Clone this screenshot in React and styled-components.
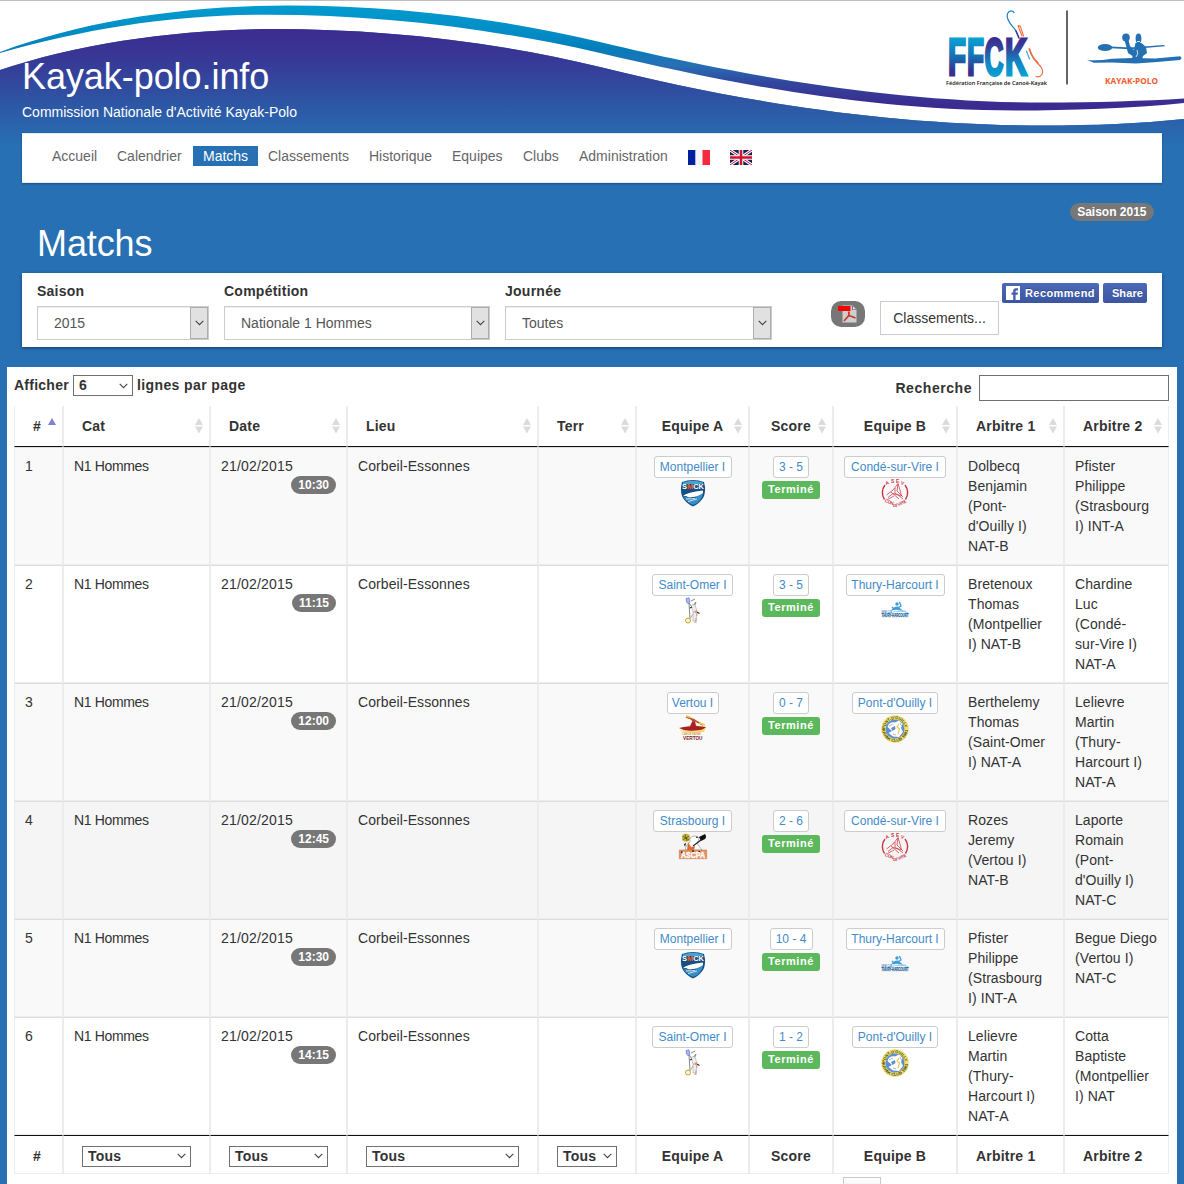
import React from "react";
import styled, { createGlobalStyle } from "styled-components";

const Global = createGlobalStyle`
  * { box-sizing: border-box; }
  html, body { margin: 0; background: #2770b4; }
  body {
    font-family: "Liberation Sans", Arial, sans-serif;
    font-size: 14px;
    line-height: 20px;
    color: #333;
    overflow: hidden;
  }
`;

const Page = styled.div`
  width: 1184px;
  height: 1184px;
  overflow: hidden;
  position: relative;
  background: #2770b4;
`;

const Banner = styled.svg`
  position: absolute;
  top: 0;
  left: 0;
  display: block;
`;

const Content = styled.div`
  position: relative;
  display: flex;
  flex-direction: column;
`;

const SiteHead = styled.header`
  padding: 57px 22px 0;
  height: 133px;
  color: #fff;
`;

const Title = styled.h1`
  margin: 0;
  font-size: 36px;
  font-weight: 400;
  line-height: 40px;
  letter-spacing: ${(p) => p.$track || 0}px;
`;

const Tagline = styled.p`
  margin: 5px 0 0;
`;

const Nav = styled.nav`
  margin: 0 22px;
  height: 50px;
  padding: 13px 20px 0;
  display: flex;
  align-items: flex-start;
  background: #fff;
  border: 1px solid #e3eef7;
  border-width: 1px 0;
  box-shadow: 0 1px 2px rgba(0, 0, 0, 0.3);
`;

const NavItem = styled.a`
  width: ${(p) => p.$w}px;
  height: 20px;
  margin-top: -1px;
  padding: 0 10px;
  white-space: nowrap;
  color: ${(p) => (p.$active ? "#fff" : "#666")};
  background: ${(p) => (p.$active ? "#2770b4" : "transparent")};
`;

const FlagItem = styled(NavItem)`
  padding-top: 4px;
  line-height: 0;
`;

const PageHead = styled.div`
  display: flex;
  justify-content: space-between;
  align-items: flex-start;
  height: 90px;
  padding: 20px 30px 0 37px;
  color: #fff;
  ${Title} { margin-top: 21px; }
`;

const Badge = styled.span`
  display: inline-block;
  height: 18px;
  padding: 0 ${(p) => p.$pad || 7}px;
  border-radius: 10px;
  background: #777;
  color: #fff;
  font-size: 12px;
  font-weight: 700;
  line-height: 18px;
  white-space: nowrap;
`;

const Filters = styled.section`
  margin: 0 22px;
  height: 74px;
  padding: 8px 15px 0;
  display: flex;
  align-items: flex-start;
  background: #fff;
  box-shadow: 0 1px 3px rgba(0, 0, 0, 0.45);
  > * { flex-shrink: 0; }
`;

const Field = styled.div`
  width: ${(p) => p.$w}px;
  margin-right: 15px;
`;

const Label = styled.label`
  display: block;
  font-weight: 700;
  letter-spacing: ${(p) => p.$track ?? 0.25}px;
`;

const BigSelect = styled.div`
  display: flex;
  align-items: stretch;
  height: 34px;
  margin-top: 5px;
  padding-left: 16px;
  border: 1px solid #ccc;
  box-shadow: inset 0 1px 1px rgba(0, 0, 0, 0.075);
  color: #555;
  line-height: 33px;
`;

const ArrowBox = styled.span`
  width: 18px;
  margin-left: auto;
  display: flex;
  align-items: center;
  justify-content: center;
  background: #e1e1e1;
  border: 1px solid #adadad;
`;

const PdfBadge = styled.span`
  width: 34px;
  height: 26px;
  margin: 20px 15px 0 44px;
  border-radius: 10px;
  background: #777;
  display: flex;
  align-items: center;
  justify-content: center;
`;

const OutlineButton = styled.button`
  width: 119px;
  height: 34px;
  margin: 20px 3px 0 0;
  padding: 0;
  background: #fff;
  border: 1px solid #ccc;
  font: inherit;
  color: #333;
`;

const FbButton = styled.span`
  width: ${(p) => p.$w}px;
  height: 20px;
  margin: 2px 4px 0 0;
  padding: 0 4px;
  display: flex;
  align-items: center;
  justify-content: ${(p) => (p.$icon ? "space-between" : "flex-end")};
  border-radius: 2px;
  background: linear-gradient(#4c69ba, #3b55a0);
  color: #fff;
  font-size: 11px;
  font-weight: 700;
  letter-spacing: ${(p) => (p.$icon ? 0.45 : 0.1)}px;
  text-shadow: 0 -1px 0 #354c8c;
`;

const TablePanel = styled.section`
  margin: 20px 7px 0;
  height: 830px;
  padding: 8px 8px 0 7px;
  background: #fff;
`;

const Controls = styled.div`
  display: flex;
  justify-content: space-between;
  align-items: flex-start;
  height: 31px;
`;

const Control = styled.div`
  display: flex;
  align-items: ${(p) => p.$align || "flex-start"};
  gap: ${(p) => p.$gap}px;
`;

const SmallSelect = styled.div`
  width: ${(p) => p.$w}px;
  height: 21px;
  padding: 0 4px 0 5px;
  display: flex;
  align-items: center;
  justify-content: space-between;
  border: 1px solid #707070;
  background: #fff;
  font-weight: 700;
  letter-spacing: 0.2px;
  line-height: 19px;
`;

const Search = styled.input`
  width: 190px;
  height: 26px;
  border: 1px solid #707070;
  padding: 0;
  background: #fff;
`;

const Table = styled.table`
  width: 1155px;
  table-layout: fixed;
  border-collapse: separate;
  border-spacing: 0;
`;

const Cell = styled.td`
  padding: 8px 10px;
  vertical-align: top;
  text-align: ${(p) => (p.$center ? "center" : "left")};
  letter-spacing: ${(p) => p.$track || 0}px;
  border: 1px solid #ececec;
  border-top-color: #ddd;
  white-space: nowrap;
`;

const HeadCell = styled.th`
  height: 41px;
  padding: 0 18px;
  text-align: ${(p) => (p.$center ? "center" : "left")};
  border: 1px solid #ececec;
  border-top: 0;
  border-bottom-color: #111;
  white-space: nowrap;
  letter-spacing: 0.2px;
  position: relative;
`;

const FootCell = styled(HeadCell)`
  height: 39px;
  padding-top: ${(p) => (p.$filter ? 3 : 2)}px;
  border-top: 1px solid #111;
  border-bottom-color: #ececec;
`;

const SortMark = styled.svg`
  position: absolute;
  right: 5px;
  top: 12px;
`;

const Row = styled.tr`
  height: ${(p) => p.$h}px;
  background: ${(p) => p.$bg};
`;

const Time = styled(Badge)`
  display: block;
  width: fit-content;
  margin-left: auto;
  letter-spacing: 0;
`;

const Tag = styled.a`
  display: block;
  width: ${(p) => p.$w}px;
  height: 22px;
  margin: 0 auto;
  border: 1px solid #ccc;
  border-radius: 3px;
  background: #fff;
  color: #428bca;
  font-size: 12px;
  line-height: 20px;
  text-align: center;
`;

const Status = styled.span`
  display: block;
  width: 58px;
  height: 18px;
  margin: 3px auto 0;
  border-radius: 3px;
  background: #5cb85c;
  color: #fff;
  font-size: 11px;
  font-weight: 700;
  line-height: 17px;
  letter-spacing: 0.55px;
`;

const LogoSlot = styled.span`
  display: block;
  height: 28px;
  margin-top: 1px;
  line-height: 0;
  svg { overflow: visible; }
`;

const PagerButton = styled.div`
  width: 38px;
  height: 30px;
  margin: 3px 0 0 829px;
  border: 1px solid #cacaca;
  background: linear-gradient(#fff, #ddd);
`;

const Chevron = ({ color = "#444" }) => (
  <svg width="9" height="6" viewBox="0 0 9 6" fill="none" stroke={color} strokeWidth="1.1">
    <path d="M.7.8 4.5 4.6 8.3.8" />
  </svg>
);

const Font = '"Liberation Sans", Arial, sans-serif';

const LETTERS = [
  { c: "F", x: 948, w: 18, paint: "url(#ff)" },
  { c: "F", x: 967, w: 17, paint: "url(#ff)" },
  { c: "C", x: 984.5, w: 19, paint: "url(#ck)" },
  { c: "K", x: 1005, w: 22, paint: "url(#ck)" },
];

const BannerArt = () => (
  <Banner width="1184" height="184" viewBox="0 0 1184 184">
    <defs>
      <linearGradient id="sky" gradientUnits="userSpaceOnUse" x1="0" y1="29" x2="0" y2="146">
        <stop offset="0" stopColor="#3d2b90" />
        <stop offset=".3" stopColor="#363b98" />
        <stop offset=".65" stopColor="#2d57a5" />
        <stop offset="1" stopColor="#2770b4" />
      </linearGradient>
      <linearGradient id="ribbon" gradientUnits="userSpaceOnUse" x1="0" y1="5" x2="0" y2="105">
        <stop offset="0" stopColor="#039ccf" />
        <stop offset=".3" stopColor="#028bc4" />
        <stop offset=".45" stopColor="#067cba" />
        <stop offset=".6" stopColor="#2770b4" />
        <stop offset=".78" stopColor="#32469d" />
        <stop offset="1" stopColor="#3b2a8f" />
      </linearGradient>
      <linearGradient id="ff" gradientUnits="userSpaceOnUse" x1="0" y1="38" x2="0" y2="77">
        <stop offset="0" stopColor="#0aa2d4" />
        <stop offset=".45" stopColor="#1573b5" />
        <stop offset=".85" stopColor="#37308f" />
        <stop offset="1" stopColor="#37308f" />
      </linearGradient>
      <linearGradient id="ck" gradientUnits="userSpaceOnUse" x1="0" y1="38" x2="0" y2="77">
        <stop offset="0" stopColor="#3b2a8f" />
        <stop offset=".25" stopColor="#34429b" />
        <stop offset=".6" stopColor="#1382c0" />
        <stop offset="1" stopColor="#08a3d6" />
      </linearGradient>
    </defs>
    <path fill="#fff" d="M0 0H1184V119C1140 123.500 1095 125.500 1043 125.500C870 125.500 717 96 600 67C490 40 375 29 275 29C180 29 80 43 0 70Z" />
    <path fill="url(#sky)" d="M0 70C80 43 180 29 275 29C375 29 490 40 600 67C717 96 870 125.500 1043 125.500C1095 125.500 1140 123.500 1184 119V184H0Z" />
    <path fill="url(#ribbon)" d="M0 52C85 20 190 5.500 287 5.500C400 5.500 510 20 600 42C700 66 870 102.500 1043 102.500C1095 102.500 1145 101 1184 98.500V103C1130 108.500 1070 110.500 1016 110.500C860 110.500 715 80 600 53C490 28 380 14.700 268 14.700C170 14.700 85 29 0 53Z" />
    <path stroke="#c0c0c0" d="M0 .5H1184" />

    <g fontFamily={Font} fontWeight="700">
      {LETTERS.map(({ c, x, w, paint }) => (
        <text key={x} x={x} y="75.200" fontSize="51.500" textLength={w} lengthAdjust="spacingAndGlyphs" fill={paint} stroke={paint} strokeWidth="3">{c}</text>
      ))}
      <text x="946" y="84.500" fontFamily='"Open Sans", sans-serif' fontWeight="600" fontSize="6" textLength="101" lengthAdjust="spacingAndGlyphs" fill="#111">Fédération Française de Canoë-Kayak</text>
      <text x="1105" y="84" fontFamily='"Open Sans", sans-serif' fontSize="8" textLength="53" lengthAdjust="spacingAndGlyphs" fill="#ee5a2b">KAYAK-POLO</text>
    </g>
    <g fill="none" strokeLinecap="round">
      <path stroke="#1b83bf" strokeWidth="1.200" d="M1014 12.500C1011 9 1006 12 1007.500 18C1009 24 1014 27 1016 31" />
      <path stroke="#37308f" strokeWidth="1.600" d="M1016 31L1019 38" />
      <path stroke="#ee6a40" strokeWidth="1.100" d="M1022 36L1018.500 27Q1017 24.500 1020.500 26.500L1023.500 36M1029 49C1032 58 1037 63 1041 67C1045 73 1041 78 1036 76.500" />
      <path stroke="#ee6a40" strokeWidth="1.500" d="M1029.500 49C1032 57 1034 59 1038 63" />
      <path stroke="#42a9da" strokeWidth="1.200" d="M1026.500 51L1029.500 59" />
    </g>
    <path stroke="#333" strokeWidth="1.500" d="M1067 10.500V84.500" />
    <g fill="#2470b3">
      <ellipse cx="1105" cy="47.500" rx="7.200" ry="3.600" />
      <path d="M1087 60Q1098 61 1112 58.800L1132 58 1155 58.500 1180 56.200Q1183 58 1180 60L1157 62 1136 63.500 1112 62.500 1094 62.800Z" />
      <path d="M1111 46.500L1130 47.500 1164 45 1165 46.300 1130 49.300 1111 48.200Z" />
      <ellipse cx="1126" cy="37.500" rx="3.800" ry="4" />
      <path d="M1124.500 40H1128.500L1130 46 1134 50 1135.500 43H1141.500L1146 47 1147 53 1143 56 1142 60H1132L1132.500 56 1128 53Z" />
      <ellipse cx="1138.500" cy="38.500" rx="2.900" ry="5" />
    </g>
    <path stroke="#fff" strokeWidth=".8" fill="none" d="M1137 50Q1139 54 1136 57M1137 41.500H1140" />
  </Banner>
);

const FlagFr = () => (
  <svg width="22" height="15" viewBox="0 0 22 15">
    <path fill="#f5f5f8" d="M0 0h22v15H0z" />
    <path fill="#00209f" d="M0 0h7.300v15H0z" />
    <path fill="#f42a3c" d="M14.500 0H22v15h-7.500z" />
  </svg>
);

const FlagUk = () => (
  <svg width="22" height="15" viewBox="0 0 22 15">
    <path fill="#12205f" d="M0 0h22v15H0z" />
    <path stroke="#fff" strokeWidth="3" d="M0 0L22 15M22 0L0 15" />
    <path stroke="#cf142b" strokeWidth="1" d="M0 0L22 15M22 0L0 15" />
    <path stroke="#fff" strokeWidth="4.600" d="M11 0V15M0 7.500H22" />
    <path stroke="#cf142b" strokeWidth="2.600" d="M11 0V15M0 7.500H22" />
  </svg>
);

const PdfIcon = () => (
  <svg width="20" height="20" viewBox="0 0 20 20">
    <path fill="#d0cfcd" d="M4.500 1.500H14.500L18.500 5.500V18.500H4.500Z" />
    <path fill="#777" d="M14 1L19 6H14Z" />
    <path fill="#eee" d="M15 2.500V5.300H17.800Z" />
    <path fill="#fb0000" d="M0 2H12.500V7H0Z" />
    <path fill="none" stroke="#c8322b" strokeWidth="1.600" d="M10.500 7.500Q12 10 10 12.500L6 17M10 12H12.500L17.500 14" />
  </svg>
);

const FbIcon = () => (
  <svg width="14" height="14" viewBox="0 0 14 14">
    <path fill="#fff" d="M0 0H14V14H0z" />
    <path fill="#4560ac" d="M7.200 14V8.800H5.500V6.600H7.200V5Q7.200 2.400 9.800 2.300H12V4.400H10.500Q9.600 4.400 9.600 5.300V6.600H12L11.600 8.800H9.600V14Z" />
  </svg>
);

const LogoMontpellier = () => (
  <svg width="28" height="28" viewBox="0 0 28 28">
    <path fill="#174f82" d="M3 3Q14-1 25 3L26 8Q26.500 15 24 19Q20 25 14 27.500Q8 25 4 19Q1.500 15 2 8Z" />
    <path fill="#4aa3d4" d="M4 3.500Q14 0 24 3.500L24 5H4Z" />
    <path fill="#398fc5" d="M4 17L13 20 24 14Q23 23 14 26 7 23 4 17Z" />
    <path fill="#fff" d="M4 17Q8 13 24 11.500L24 14Q19 18 10 18.500L7 17Z" />
    <path stroke="#d5ecf7" strokeWidth=".9" d="M7 20L16 19.500M9 22.500L18 20" />
    <text x="3" y="10.300" fontFamily={Font} fontWeight="700" fontSize="7.800" textLength="22" lengthAdjust="spacingAndGlyphs" fill="#fff">
      S<tspan fill="#f05b25">M</tspan>CK
    </text>
  </svg>
);

const LogoConde = () => (
  <svg width="28" height="28" viewBox="0 0 28 28" fill="none" stroke="#cc3342">
    <path strokeWidth="1.400" d="M4 6A12.300 12.300 0 0 0 3.500 20.500M24 6A12.300 12.300 0 0 1 24.500 20.500" />
    <path strokeWidth=".75" d="M5.500 16L12 11 14.500 8 17 4.500 19 11 20.500 17M7 18.500L12 14.500 17 16 22 20M6.500 20.500L13 17M14 9L14 14.500 20 17M10 13L18 20M17 5L16 12 22 18" />
    <g fill="#cc3342" stroke="none" fontFamily={Font} fontWeight="700" fontSize="4.800">
      <text x="4.500" y="5.500" transform="rotate(-20 6 4)">A</text>
      <text x="10" y="4.200">S</text>
      <text x="15" y="4.200">E</text>
      <text x="20" y="5.600" transform="rotate(18 21 4)">V</text>
      <text x="3.500" y="23" fontSize="4.300" textLength="9" transform="rotate(22 4 23)">CON</text>
      <text x="12" y="27.800" fontSize="4.300" textLength="4.500" lengthAdjust="spacingAndGlyphs">DÉ</text>
      <text x="17.500" y="27" fontSize="4.300" textLength="9" lengthAdjust="spacingAndGlyphs" transform="rotate(-26 18 27)">VIRE</text>
    </g>
  </svg>
);

const LogoSaintOmer = () => (
  <svg width="28" height="28" viewBox="0 0 28 28" fill="none">
    <path fill="#aab6f3" stroke="#6879cc" strokeWidth=".7" d="M7 1.500L10 .8 11 5.500 9 6.800 7.500 5Z" />
    <path stroke="#888" strokeWidth="1" d="M10 6L13 10 19 16M10 6L11 22M12 4L14 3 16 2M13 10L17 5 15 10 17 16" />
    <path fill="#eee" stroke="#aaa" strokeWidth=".6" d="M12 8L16 8 18 14 14 15ZM14 15L18 16 17 24 14 24Z" />
    <path stroke="#333" strokeWidth="1.200" d="M17 14.500L20.500 16.500M13 10L11 11" />
    <path stroke="#ef9b7e" strokeWidth="1.200" d="M17 13L18 19M15 25H17" />
    <circle cx="9" cy="23.500" r="2.500" fill="#fff6c8" stroke="#caa23a" />
    <path stroke="#999" strokeWidth=".8" d="M11.500 21L14 17M17 21L17 26" />
  </svg>
);

const LogoThury = () => (
  <svg width="28" height="28" viewBox="0 0 28 28" fill="none">
    <path fill="#3f9dd6" d="M10 13.500Q13 9 17 9.500L22.500 14Q16 12 10 13.500Z" />
    <circle cx="16" cy="7" r="1.700" fill="#3f9dd6" />
    <path stroke="#3f9dd6" strokeWidth="1.300" d="M18.500 5L20 9 15 12M11 10L14 13" />
    <path stroke="#8cc6e8" strokeWidth=".9" d="M11.500 15.300Q17 13 27 15.500M17 14L25 14" />
    <g fontFamily={Font} fontWeight="700">
      <text x=".5" y="15.800" fontSize="3" textLength="10.500" lengthAdjust="spacingAndGlyphs" fill="#3d7cb5">KAYAK CLUB</text>
      <text x=".5" y="20" fontSize="4.800" textLength="27" lengthAdjust="spacingAndGlyphs" fill="#1c5f9d" stroke="#1c5f9d" strokeWidth=".25">THURY-HARCOURT</text>
    </g>
  </svg>
);

const LogoVertou = () => (
  <svg width="28" height="28" viewBox="0 0 28 28">
    <path fill="#f3dc74" d="M1 16L12 9 27 12 25 17 12 17.500Z" />
    <path fill="#a81d27" d="M0 13Q6 11 11 11.500L13 7 16 6 17 11 27 12Q24 15.500 15 15.500 6 16.500 0 13Z" />
    <circle cx="14.500" cy="5.500" r="1.800" fill="#c14c2c" />
    <path stroke="#bf5636" strokeWidth="1.800" d="M7 2L13 4 24 10" />
    <path stroke="#f0c93f" strokeWidth="1.500" d="M7 1L12 2.500M20 8L26 10" />
    <g fontFamily={Font} fontWeight="700">
      <text x="3" y="20" fontSize="3.300" textLength="19" lengthAdjust="spacingAndGlyphs" fill="#d49a36">CANOE KAYAK</text>
      <text x="4" y="25.300" fontSize="5.300" textLength="19.500" lengthAdjust="spacingAndGlyphs" fill="#7b1a2c">VERTOU</text>
    </g>
  </svg>
);

const LogoPont = () => (
  <svg width="28" height="28" viewBox="0 0 28 28">
    <defs>
      <path id="pontTop" d="M4.200 14A9.800 9.800 0 0 1 23.800 14" />
      <path id="pontLow" d="M1.200 14A12.800 12.800 0 0 0 26.800 14" />
    </defs>
    <circle cx="14" cy="14" r="13.700" fill="#efe170" />
    <circle cx="14" cy="14" r="9.500" fill="#5d8fd2" />
    <path fill="#fff" d="M6.500 12Q8 6.500 14 7.500L18 5.500 21.500 9 20 13 22 17 18 22 12 21.500 7.500 18 11 16Z" />
    <path fill="#5d8fd2" d="M10 13L14 11 14.500 14 11.500 16Z" />
    <path fill="none" stroke="#e3c94c" strokeWidth="1.100" d="M18 9L16 12 18.500 14 17 19" />
    <path fill="none" stroke="#888" strokeWidth=".6" d="M8 11L12 9M19 8L20.500 11M12 19L15 20" />
    <g fontFamily={Font} fontWeight="700" fontSize="4.200" fill="#4a4922">
      <text><textPath href="#pontTop" textLength="29" lengthAdjust="spacingAndGlyphs">PONT-D'OUILLY</textPath></text>
      <text><textPath href="#pontLow" textLength="39" lengthAdjust="spacingAndGlyphs">KAYAK CLUB 1981</textPath></text>
    </g>
  </svg>
);

const LogoStrasbourg = () => (
  <svg width="28" height="28" viewBox="0 0 28 28">
    <circle cx="7" cy="4.800" r="4" fill="#c6b932" />
    <path stroke="#3b3810" strokeWidth=".6" fill="none" d="M3.500 3L10 7M6 1L8 8M3.500 7L10 3" />
    <path fill="#fff" stroke="#777" strokeWidth=".5" d="M11 5Q16 1 20 5L18.500 11 23 17H6Q7 11 11 9Z" />
    <path fill="#111" d="M20 4L26 1Q28 4 26 6L22 8Z" />
    <path stroke="#222" strokeWidth="1.100" d="M22 7L14 13" />
    <path fill="#de6b37" d="M9 9L12 14 16 13 15 17H8Z" />
    <path fill="#111" d="M18 3L19 5 17 5ZM5 11L7 10 6 14Z" />
    <path fill="#e7915f" stroke="#b5705a" strokeWidth=".5" d="M.3 17H27.700V25.700H.3Z" />
    <path fill="#222" d="M2 18.500H4V20H2ZM13 17.500H15V19.500H13ZM19 18H21V19.500H19Z" />
    <text x="2" y="24.500" fontFamily={Font} fontWeight="700" fontSize="8.500" textLength="24" lengthAdjust="spacingAndGlyphs" fill="#fff" stroke="#fff" strokeWidth=".4">ASCPA</text>
  </svg>
);

const TEAMS = {
  montpellier: { name: "Montpellier I", w: 78, Logo: LogoMontpellier },
  conde: { name: "Condé-sur-Vire I", w: 102, Logo: LogoConde },
  omer: { name: "Saint-Omer I", w: 81, Logo: LogoSaintOmer },
  thury: { name: "Thury-Harcourt I", w: 99, Logo: LogoThury },
  vertou: { name: "Vertou I", w: 52, Logo: LogoVertou },
  pont: { name: "Pont-d'Ouilly I", w: 86, Logo: LogoPont },
  strasbourg: { name: "Strasbourg I", w: 79, Logo: LogoStrasbourg },
};

const NAV = [
  ["Accueil", 65], ["Calendrier", 86], ["Matchs", 65], ["Classements", 101],
  ["Historique", 83], ["Equipes", 71], ["Clubs", 56], ["Administration", 109],
];

const COLUMNS = [
  { title: "#", w: 49, sorted: true },
  { title: "Cat", w: 147, filter: 109 },
  { title: "Date", w: 137, filter: 99 },
  { title: "Lieu", w: 191, filter: 153 },
  { title: "Terr", w: 98, filter: 60 },
  { title: "Equipe A", w: 113, center: true },
  { title: "Score", w: 84, center: true },
  { title: "Equipe B", w: 124, center: true },
  { title: "Arbitre 1", w: 107 },
  { title: "Arbitre 2", w: 105 },
];

const MATCHES = [
  { time: "10:30", a: "montpellier", b: "conde", score: "3 - 5", h: 118, bg: "#f9f9f9",
    r1: ["Dolbecq", "Benjamin", "(Pont-", "d'Ouilly I)", "NAT-B"], r2: ["Pfister", "Philippe", "(Strasbourg", "I) INT-A"] },
  { time: "11:15", a: "omer", b: "thury", score: "3 - 5", h: 118, bg: "#fff",
    r1: ["Bretenoux", "Thomas", "(Montpellier", "I) NAT-B"], r2: ["Chardine", "Luc", "(Condé-", "sur-Vire I)", "NAT-A"] },
  { time: "12:00", a: "vertou", b: "pont", score: "0 - 7", h: 118, bg: "#f9f9f9",
    r1: ["Berthelemy", "Thomas", "(Saint-Omer", "I) NAT-A"], r2: ["Lelievre", "Martin", "(Thury-", "Harcourt I)", "NAT-A"] },
  { time: "12:45", a: "strasbourg", b: "conde", score: "2 - 6", h: 118, bg: "#f5f5f5",
    r1: ["Rozes", "Jeremy", "(Vertou I)", "NAT-B"], r2: ["Laporte", "Romain", "(Pont-", "d'Ouilly I)", "NAT-C"] },
  { time: "13:30", a: "montpellier", b: "thury", score: "10 - 4", h: 98, bg: "#f9f9f9",
    r1: ["Pfister", "Philippe", "(Strasbourg", "I) INT-A"], r2: ["Begue Diego", "(Vertou I)", "NAT-C"] },
  { time: "14:15", a: "omer", b: "pont", score: "1 - 2", h: 118, bg: "#fff",
    r1: ["Lelievre", "Martin", "(Thury-", "Harcourt I)", "NAT-A"], r2: ["Cotta", "Baptiste", "(Montpellier", "I) NAT"] },
];

const Sort = ({ sorted }) => (
  <SortMark width="10" height="16" viewBox="0 0 10 16">
    <path fill={sorted ? "#8080d6" : "#dcdcdc"} d="M5 0L9 7H1Z" />
    {!sorted && <path fill="#dcdcdc" d="M1 8.500H9L5 15.500Z" />}
  </SortMark>
);

const Lines = ({ items }) =>
  items.map((t, i) => (
    <React.Fragment key={i}>
      {i > 0 && <br />}
      {t}
    </React.Fragment>
  ));

const Team = ({ id }) => {
  const { name, w, Logo } = TEAMS[id];
  return (
    <Cell $center>
      <Tag $w={w}>{name}</Tag>
      <LogoSlot><Logo /></LogoSlot>
    </Cell>
  );
};

const Select = ({ label, w, text }) => (
  <Field $w={w}>
    <Label>{label}</Label>
    <BigSelect>
      {text}
      <ArrowBox><Chevron /></ArrowBox>
    </BigSelect>
  </Field>
);

export default function App() {
  return (
    <Page>
      <Global />
      <BannerArt />
      <Content>
        <SiteHead>
          <Title $track={-0.06}>Kayak-polo.info</Title>
          <Tagline>Commission Nationale d'Activité Kayak-Polo</Tagline>
        </SiteHead>
        <Nav>
          {NAV.map(([name, w]) => (
            <NavItem key={name} $w={w} $active={name === "Matchs"}>{name}</NavItem>
          ))}
          <FlagItem $w={42}><FlagFr /></FlagItem>
          <FlagItem $w={42}><FlagUk /></FlagItem>
        </Nav>
        <PageHead>
          <Title $track={-0.1}>Matchs</Title>
          <Badge $pad={7.5}>Saison 2015</Badge>
        </PageHead>
        <Filters>
          <Select label="Saison" w={172} text="2015" />
          <Select label="Compétition" w={266} text="Nationale 1 Hommes" />
          <Select label="Journée" w={267} text="Toutes" />
          <PdfBadge><PdfIcon /></PdfBadge>
          <OutlineButton>Classements...</OutlineButton>
          <FbButton $w={97} $icon><FbIcon />Recommend</FbButton>
          <FbButton $w={44}>Share</FbButton>
        </Filters>
        <TablePanel>
          <Controls>
            <Control $gap={4}>
              <Label>Afficher</Label>
              <SmallSelect $w={60}>6<Chevron /></SmallSelect>
              <Label $track={0.4}>lignes par page</Label>
            </Control>
            <Control $gap={7} $align="center">
              <Label $track={0.55}>Recherche</Label>
              <Search />
            </Control>
          </Controls>
          <Table>
            <colgroup>
              {COLUMNS.map((c) => <col key={c.title} style={{ width: c.w }} />)}
            </colgroup>
            <thead>
              <tr>
                {COLUMNS.map((c) => (
                  <HeadCell key={c.title} $center={c.center}>
                    {c.title}
                    <Sort sorted={c.sorted} />
                  </HeadCell>
                ))}
              </tr>
            </thead>
            <tbody>
              {MATCHES.map((m, i) => (
                <Row key={m.time} $h={m.h} $bg={m.bg}>
                  <Cell>{i + 1}</Cell>
                  <Cell $track={-0.35}>N1 Hommes</Cell>
                  <Cell $track={0.2}>21/02/2015<Time>{m.time}</Time></Cell>
                  <Cell $track={0.08}>Corbeil-Essonnes</Cell>
                  <Cell />
                  <Team id={m.a} />
                  <Cell $center>
                    <Tag $w={m.score.length > 5 ? 43 : 36}>{m.score}</Tag>
                    <Status>Terminé</Status>
                  </Cell>
                  <Team id={m.b} />
                  <Cell $track={0.08}><Lines items={m.r1} /></Cell>
                  <Cell $track={0.08}><Lines items={m.r2} /></Cell>
                </Row>
              ))}
            </tbody>
            <tfoot>
              <tr>
                {COLUMNS.map((c) => (
                  <FootCell key={c.title} $center={c.center} $filter={!!c.filter}>
                    {c.filter ? <SmallSelect $w={c.filter}>Tous<Chevron /></SmallSelect> : c.title}
                  </FootCell>
                ))}
              </tr>
            </tfoot>
          </Table>
          <PagerButton />
        </TablePanel>
      </Content>
    </Page>
  );
}
